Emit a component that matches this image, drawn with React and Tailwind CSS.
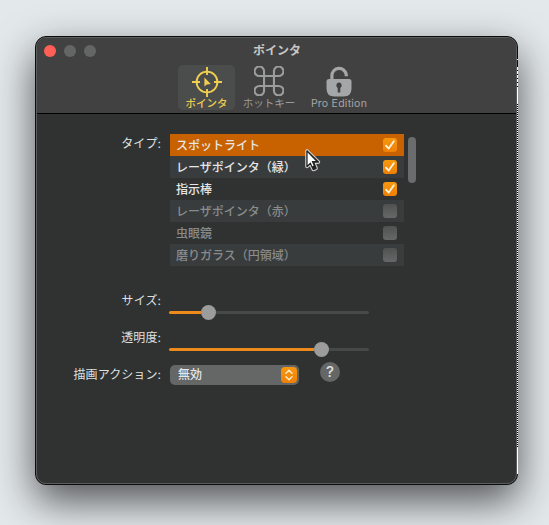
import React from "react";

const rows = [
  { name: "スポットライト", on: true },
  { name: "レーザポインタ（緑）", on: true },
  { name: "指示棒", on: true },
  { name: "レーザポインタ（赤）", on: false },
  { name: "虫眼鏡", on: false },
  { name: "磨りガラス（円領域）", on: false },
];

function CrosshairIcon() {
  return (
    <svg width="31" height="31" viewBox="0 0 31 31" fill="none" stroke="#f0cf50" strokeWidth="1.9">
      <circle cx="16" cy="16" r="10.4" />
      <path d="M16 1v8M16 23v8M1 16h8M23 16h8" />
      <path d="M13.400 11.500v9l2.400-2 4-.4z" fill="#f0cf50" stroke="none" />
    </svg>
  );
}

function CommandIcon() {
  return (
    <svg width="30" height="30" viewBox="0 0 30 30" fill="none" stroke="#9b9c9c" strokeWidth="2">
      <path d="M10.300 10.300H5.900a4.500 4.500 0 1 1 4.400-4.400v18.200a4.500 4.500 0 1 1-4.400-4.400h18.200a4.500 4.500 0 1 1-4.400 4.400V5.900a4.500 4.500 0 1 1 4.400 4.400z" transform="translate(-.8 -.8) scale(1.053)" />
    </svg>
  );
}

function LockIcon() {
  return (
    <svg width="26" height="31" viewBox="0 0 26 31">
      <path d="M5.900 14V10a7.200 7.200 0 0 1 14.400-.8v1" fill="none" stroke="#a5a6a7" strokeWidth="3.200" />
      <path d="M3 13h20q2.500 0 2.500 2.500v7q0 8-8 8h-9q-8 0-8-8v-7q0-2.500 2.500-2.500z" fill="#a5a6a7" />
      <path d="M13 16.500a2.900 2.900 0 0 0-1.300 5.400V26.500h2.600v-4.600A2.900 2.900 0 0 0 13 16.500z" fill="#414141" />
    </svg>
  );
}

function Tab({ icon, label, className }) {
  return (
    <div className={"flex h-[45px] flex-col items-center rounded-[5px] " + className}>
      <div className="flex h-[32px] shrink-0 items-center justify-center">{icon}</div>
      <span className="whitespace-nowrap text-[10.5px] leading-[13px]">{label}</span>
    </div>
  );
}

function Check({ on }) {
  return on ? (
    <span className="flex size-[14px] items-center justify-center rounded-[3px] bg-gradient-to-b from-[#f7980f] to-[#ee8006]">
      <svg width="10" height="10" viewBox="0 0 10 10" fill="none" stroke="#fff4df" strokeWidth="1.8" strokeLinecap="round" strokeLinejoin="round">
        <path d="M1 5.600l2.700 3L8.800 1.200" />
      </svg>
    </span>
  ) : (
    <span className="size-[14px] rounded-[3px] bg-gradient-to-b from-[#505151] to-[#666767]" />
  );
}

function Slider({ value }) {
  return (
    <div className="flex h-[15px] w-[200px] items-center">
      <div className="h-[3px] rounded-l-full bg-[#ec8b1c]" style={{ width: value - 7.5 }} />
      <div className="size-[15px] shrink-0 rounded-full bg-[#9c9c9d]" />
      <div className="h-[3px] grow rounded-r-full bg-[#474848]" />
    </div>
  );
}

function Label({ children }) {
  return <div className="mr-[9px] w-[124px] shrink-0 whitespace-nowrap pt-px text-right text-[12px] leading-[18px] tracking-[0.08px] text-[#dfe0e0]">{children}</div>;
}

export default function App() {
  return (
    <div className="h-[525px] w-[549px] overflow-hidden bg-[#e3e8eb] pl-[35px] pt-[36px] font-['Inter','Noto_Sans_CJK_JP',sans-serif]">
      <div className="relative h-[449px] w-[483px] rounded-[11px] border border-[#0b0c0c] bg-[#303231] shadow-[0_16px_40px_0_rgba(0,0,0,0.65)]">
        <div className="flex h-[447px] flex-col overflow-hidden rounded-[10px] border border-[#5c5e5d]">
          <header className="h-[76px] shrink-0 border-b border-black bg-[#414141]">
            <div className="mb-px flex h-[26px] items-center pl-[7px]">
              <div className="flex w-[52px] gap-2">
                <span className="size-3 rounded-full bg-[#ff5f57]" />
                <span className="size-3 rounded-full bg-[#636665]" />
                <span className="size-3 rounded-full bg-[#636665]" />
              </div>
              <h1 className="ml-[157px] text-[12px] font-bold text-[#c6c7c7]">ポインタ</h1>
            </div>
            <nav className="flex pl-[141px]">
              <Tab icon={<CrosshairIcon />} label="ポインタ" className="w-[57px] bg-[#4b4d4c] font-medium text-[#f0cf50]" />
              <Tab icon={<CommandIcon />} label="ホットキー" className="ml-[5px] w-[58px] text-[#9b9c9c]" />
              <Tab icon={<LockIcon />} label="Pro Edition" className="ml-[8px] w-[66px] tracking-[0.25px] text-[#a5a6a7]" />
            </nav>
          </header>
          <main className="pt-[20px]">
            <div className="flex">
              <Label>タイプ:</Label>
              <div className="w-[234px] text-[12px] font-medium">
                {rows.map((r, i) => (
                  <div
                    key={r.name}
                    className={
                      "flex h-[22px] items-center justify-between pl-[6px] pr-[7px] " +
                      (i === 0 ? "bg-[#c86200] " : i % 2 ? "bg-[#393c3d] " : "") +
                      (r.on ? "text-[#e6e6e6]" : "text-[#8a8b8c]")
                    }
                  >
                    <span className="pt-[2px]">{r.name}</span>
                    <Check on={r.on} />
                  </div>
                ))}
              </div>
              <div className="ml-[4px] mt-[3px] h-[46px] w-[8px] rounded-full bg-[#6b6c6d]" />
            </div>
            <div className="mt-[25px] flex h-[37px]">
              <Label>サイズ:</Label>
              <div className="-ml-px pt-[14px]"><Slider value={39.5} /></div>
            </div>
            <div className="flex h-[36px]">
              <Label>透明度:</Label>
              <div className="-ml-px pt-[14px]"><Slider value={152} /></div>
            </div>
            <div className="flex h-[24px]">
              <div className="pt-px"><Label>描画アクション:</Label></div>
              <div className="mt-px flex h-[20px] w-[129px] items-center justify-between rounded-[5px] bg-[#656666] pl-[8px] pr-[2px] text-[12px] font-medium text-[#e6e7e7]">
                無効
                <span className="flex size-[16px] items-center justify-center rounded-[4px] bg-gradient-to-b from-[#f7980f] to-[#ee8006]">
                  <svg width="8" height="12" viewBox="0 0 8 12" fill="none" stroke="#ffe9c8" strokeWidth="1.5" strokeLinecap="round" strokeLinejoin="round">
                    <path d="M1 4.200l3-3 3 3M1 7.800l3 3 3-3" />
                  </svg>
                </span>
              </div>
              <div className="-mt-[2px] ml-[21px] flex size-[20px] items-center justify-center rounded-full bg-[#656666] text-[15px] font-medium text-[#e0e0e0]">?</div>
            </div>
          </main>
        </div>
        <div className="absolute -right-px top-[22px] h-px w-px bg-white" />
        <div className="absolute -right-px top-[30px] h-[22px] w-px bg-[repeating-linear-gradient(to_bottom,#fff_0_3px,#000_3px_4px)]" />
        <div className="absolute -right-px top-[52px] h-[15px] w-px bg-white" />
        <div className="absolute -right-px top-[67px] h-[344px] w-px bg-[repeating-linear-gradient(to_bottom,#000_0_1px,#fff_1px_2px)]" />
        <div className="absolute -right-px top-[411px] h-[26px] w-px bg-white" />
        <svg className="absolute left-[268px] top-[111px]" width="18" height="25" viewBox="0 0 18 25" strokeLinejoin="round">
          <path d="M3 3v15.500l3.500-3.300 2.800 6.300 2.800-1.200-2.700-6.200h5z" fill="none" stroke="#cfcfcf" strokeWidth="3.600" />
          <path d="M3 3v15.500l3.500-3.300 2.800 6.300 2.800-1.200-2.700-6.200h5z" fill="#222" stroke="#222" strokeWidth="1.400" />
          <path d="M3.600 4.500v12.500l3-2.800 1.800 4 1.200-.5-2-4.600h4.200z" fill="#fff" />
        </svg>
      </div>
    </div>
  );
}
